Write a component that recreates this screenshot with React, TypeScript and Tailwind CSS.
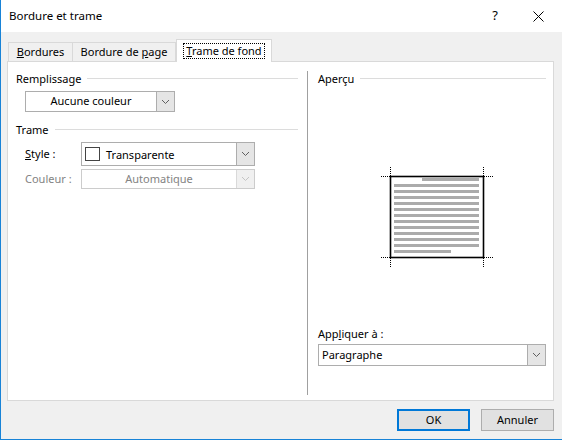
import React from 'react';

const font = { fontFamily: '"Noto Sans", "Segoe UI", sans-serif' };

function Chevron({ disabled }: { disabled?: boolean }) {
  return (
    <svg width="9" height="6" viewBox="0 0 9 6">
      <path d="M1 1 L4.5 4.5 L8 1" fill="none" stroke={disabled ? '#c4c4c4' : '#606060'} strokeWidth="1" />
    </svg>
  );
}

function GroupTitle({ label }: { label: string }) {
  return (
    <div className="flex h-[16px] items-center">
      <span className="leading-none text-[#000]">{label}</span>
      <div className="ml-[6px] h-px flex-1 bg-[#dcdcdc]" />
    </div>
  );
}

function Preview() {
  const lines = Array.from({ length: 13 }, (_, i) => i);
  return (
    <svg width="120" height="110" viewBox="0 0 120 110">
      {lines.map((i) => {
        const y = 17 + i * 6;
        const x1 = i === 0 ? 47 : 19;
        const x2 = i === 12 ? 76 : 104;
        return <rect key={i} x={x1} y={y} width={x2 - x1} height="3" fill="#ababab" />;
      })}
      <rect x="15.5" y="15.5" width="93" height="81" fill="none" stroke="#000" strokeWidth="1.6" />
      <g stroke="#000" strokeWidth="1" strokeDasharray="1 1" fill="none">
        <path d="M6 15.5 H15" />
        <path d="M15.5 6 V15" />
        <path d="M109 15.5 H118" />
        <path d="M108.5 6 V15" />
        <path d="M6 96.5 H15" />
        <path d="M15.5 97 V106" />
        <path d="M109 96.5 H118" />
        <path d="M108.5 97 V106" />
      </g>
    </svg>
  );
}

export default function App() {
  return (
    <div
      className="flex h-[440px] w-[562px] flex-col border-b border-l border-[#1883d7] bg-[#f0f0f0] text-[11px] text-black"
      style={font}
    >
      {/* title bar */}
      <div className="flex h-[32px] shrink-0 items-center bg-white pl-[8px] pr-[18px]">
        <span className="text-[11.5px]">Bordure et trame</span>
        <span className="ml-auto mr-[35px] text-[13px]">?</span>
        <svg width="11" height="11" viewBox="0 0 11 11">
          <path d="M0.5 0.5 L10.5 10.5 M10.5 0.5 L0.5 10.5" stroke="#000" strokeWidth="1" />
        </svg>
      </div>

      <div className="flex flex-1 flex-col pl-[6px] pt-[7px]">
        {/* tabs */}
        <div className="relative z-10 flex h-[22px] items-end pl-[1px]">
          <div className="flex h-[19px] w-[65px] items-center justify-center border border-b-0 border-[#d9d9d9] bg-[#f0f0f0]">
            <span>
              <u>B</u>ordures
            </span>
          </div>
          <div className="flex h-[19px] w-[103px] items-center justify-center border border-b-0 border-l-0 border-[#d9d9d9] bg-[#f0f0f0]">
            <span>
              Bordure de <u>p</u>age
            </span>
          </div>
          <div className="-mb-px flex h-[23px] w-[96px] items-center justify-center border border-b-0 border-[#d9d9d9] bg-white">
            <span className="border border-dotted border-black px-[2px] leading-[14px]">
              <u>T</u>rame de fond
            </span>
          </div>
        </div>

        {/* panel */}
        <div className="flex h-[340px] w-[547px] border border-[#d9d9d9] bg-white">
          {/* left column */}
          <div className="flex w-[299px] flex-col pl-[8px] pr-[9px] pt-[8px]">
            <GroupTitle label="Remplissage" />
            <div className="ml-[9px] mt-[5px] flex h-[21px] w-[150px] border border-[#adadad]">
              <div className="flex flex-1 items-center justify-center">Aucune couleur</div>
              <div className="flex w-[18px] items-center justify-center border-l border-[#adadad] bg-[#e5e5e5]">
                <Chevron />
              </div>
            </div>

            <div className="mt-[9px]">
              <GroupTitle label="Trame" />
            </div>

            <div className="mt-[5px] flex h-[24px] items-center pl-[9px]">
              <span className="w-[56px]">
                <u>S</u>tyle :
              </span>
              <div className="flex h-[24px] w-[174px] border border-[#adadad]">
                <div className="flex flex-1 items-center pl-[3px]">
                  <div className="h-[14px] w-[15px] border border-[#444]" />
                  <span className="ml-[6px] mt-[3px]">Transparente</span>
                </div>
                <div className="flex w-[18px] items-center justify-center border-l border-[#adadad] bg-[#e5e5e5]">
                  <Chevron />
                </div>
              </div>
            </div>

            <div className="mt-[3px] flex h-[20px] items-center pl-[9px]">
              <span className="w-[56px] text-[#838383]">Couleur :</span>
              <div className="flex h-[20px] w-[174px] border border-[#cccccc]">
                <div className="flex flex-1 items-center justify-center text-[#838383]">Automatique</div>
                <div className="flex w-[18px] items-center justify-center border-l border-[#d9d9d9] bg-[#f0f0f0]">
                  <Chevron disabled />
                </div>
              </div>
            </div>
          </div>

          {/* divider */}
          <div className="mb-[5px] mt-[9px] w-px bg-[#a0a0a0]" />

          {/* right column */}
          <div className="flex flex-1 flex-col pl-[10px] pr-[7px] pt-[8px]">
            <GroupTitle label="Aperçu" />
            <div className="ml-[57px] mt-[75px]">
              <Preview />
            </div>
            <div className="mt-[55px] flex h-[16px] items-center">
              <span>
                App<u>l</u>iquer à :
              </span>
            </div>
            <div className="mt-[2px] flex h-[22px] border border-[#adadad]">
              <div className="flex flex-1 items-center pl-[3px]">Paragraphe</div>
              <div className="flex w-[18px] items-center justify-center border-l border-[#adadad] bg-[#e5e5e5]">
                <Chevron />
              </div>
            </div>
          </div>
        </div>

        {/* buttons */}
        <div className="mt-[8px] flex justify-end gap-[11px] pr-[8px]">
          <button className="flex h-[22px] w-[73px] items-center justify-center border-2 border-[#0078d7] bg-[#e1e1e1]">
            OK
          </button>
          <button className="flex h-[22px] w-[73px] items-center justify-center border border-[#adadad] bg-[#e1e1e1]">
            Annuler
          </button>
        </div>
      </div>
    </div>
  );
}
